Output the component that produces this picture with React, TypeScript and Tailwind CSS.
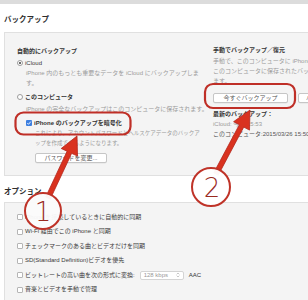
import type { ReactNode } from 'react'

function Radio({ on = false }: { on?: boolean }) {
  return (
    <span className="flex h-[6px] w-[6px] shrink-0 items-center justify-center rounded-full border-[0.5px] border-[#9d9d9d] bg-white">
      {on && <span className="h-[2.5px] w-[2.5px] rounded-full bg-[#3a3a3a]" />}
    </span>
  )
}

function Box({ checked = false }: { checked?: boolean }) {
  if (checked) {
    return (
      <span className="flex h-[6px] w-[6px] shrink-0 items-center justify-center rounded-[1px] bg-[#3d7fe0]">
        <svg viewBox="0 0 6 6" className="h-[6px] w-[6px]">
          <path d="M1.3 3.1 2.5 4.3 4.8 1.6" fill="none" stroke="white" strokeWidth="0.9" />
        </svg>
      </span>
    )
  }
  return <span className="h-[6px] w-[6px] shrink-0 rounded-[1px] border-[0.5px] border-[#b5b5b5] bg-white" />
}

function Btn({ children, w }: { children: ReactNode; w: string }) {
  return (
    <div
      className={`flex h-[10px] shrink-0 items-center justify-center rounded-[2px] border-[0.5px] border-[#c6c6c6] bg-white text-[6px] text-[#555] shadow-[0_0.5px_0.5px_rgba(0,0,0,0.08)] ${w}`}
    >
      {children}
    </div>
  )
}

function Line({ children, className = '' }: { children: ReactNode; className?: string }) {
  return <div className={`h-[10px] whitespace-nowrap leading-[10px] ${className}`}>{children}</div>
}

function OptionRow({ children }: { children: ReactNode }) {
  return (
    <div className="flex h-[10px] items-center gap-[2px] whitespace-nowrap text-[6px] text-[#3a3a3a]">
      <Box />
      {children}
    </div>
  )
}

function arrow(x1: number, y1: number, x2: number, y2: number, w = 5, hl = 18, hw = 18) {
  const len = Math.hypot(x2 - x1, y2 - y1)
  const ux = (x2 - x1) / len
  const uy = (y2 - y1) / len
  const px = -uy
  const py = ux
  const bx = x2 - ux * hl
  const by = y2 - uy * hl
  const pts = [
    [x1 + (px * w) / 2, y1 + (py * w) / 2],
    [bx + (px * w) / 2, by + (py * w) / 2],
    [bx + (px * hw) / 2, by + (py * hw) / 2],
    [x2, y2],
    [bx - (px * hw) / 2, by - (py * hw) / 2],
    [bx - (px * w) / 2, by - (py * w) / 2],
    [x1 - (px * w) / 2, y1 - (py * w) / 2],
  ]
  return pts.map((p) => p.join(',')).join(' ')
}

function Marks() {
  return (
    <svg className="pointer-events-none absolute left-0 top-0" width="308" height="300" viewBox="0 0 308 300">
      <rect x="15.5" y="112.5" width="115" height="22" rx="8" fill="none" stroke="#bf2f27" strokeWidth="2.2" />
      <rect x="205" y="84" width="90" height="24" rx="8" fill="none" stroke="#bf2f27" strokeWidth="2.2" />
      <polygon points={arrow(48, 198, 77, 136)} fill="#d9321f" stroke="#b3241a" strokeWidth="0.8" />
      <polygon points={arrow(216, 174, 250, 110)} fill="#d9321f" stroke="#b3241a" strokeWidth="0.8" />
      <circle cx="43" cy="211" r="18" fill="#fbfbfb" fillOpacity="0.96" stroke="#bf3328" strokeWidth="2" />
      <circle cx="211" cy="187" r="19" fill="#ffffff" fillOpacity="0.96" stroke="#bf3328" strokeWidth="2" />
      <text x="43" y="220.5" textAnchor="middle" fontSize="26" fill="#9a2a1f" fontFamily="'DejaVu Sans', sans-serif" fontWeight="300">
        1
      </text>
      <text x="212" y="196.5" textAnchor="middle" fontSize="26" fill="#9a2a1f" fontFamily="'DejaVu Sans', sans-serif" fontWeight="300">
        2
      </text>
    </svg>
  )
}

export default function App() {
  return (
    <div className="relative h-[300px] w-[308px] overflow-hidden bg-white font-['Liberation_Sans','Noto_Sans_CJK_JP',sans-serif] text-[#3a3a3a]">
      <div className="h-[4px] bg-[#dcdcdc]" />

      <div className="pl-[4px]">
        <h2 className="h-[28px] pt-[11px] text-[7.5px] font-bold leading-[10px] text-[#2e2e2e]">バックアップ</h2>

        <div className="flex h-[144px] w-[340px] border border-[#e0e0e0] bg-[#f4f4f4]">
          {/* left column */}
          <div className="flex w-[208px] shrink-0 flex-col pl-[12px] pt-[13px] text-[6px]">
            <Line className="font-bold text-[#333]">自動的にバックアップ</Line>
            <div className="mt-[2px] flex h-[10px] items-center gap-[2px]">
              <Radio on />
              <span>iCloud</span>
            </div>
            <Line className="pl-[9px] text-[#9b9b9b]">iPhone 内のもっとも重要なデータを iCloud にバックアップしま</Line>
            <Line className="pl-[9px] text-[#9b9b9b]">す。</Line>
            <div className="mt-[4px] flex h-[10px] items-center gap-[2px]">
              <Radio />
              <span className="font-bold text-[#333]">このコンピュータ</span>
            </div>
            <Line className="mt-[2px] pl-[9px] text-[#9b9b9b]">iPhone の完全なバックアップはこのコンピュータに保存されます。</Line>
            <div className="mt-[4px] flex h-[10px] items-center gap-[2px] pl-[9px]">
              <Box checked />
              <span className="font-semibold text-[#333]">iPhone のバックアップを暗号化</span>
            </div>
            <Line className="pl-[18px] text-[5.5px] text-[#9b9b9b]">これにより、アカウントパスワードとヘルスケアデータのバックア</Line>
            <Line className="pl-[18px] text-[5.5px] text-[#9b9b9b]">ップを作成できるようになります。</Line>
            <div className="mt-[5px] pl-[18px]">
              <Btn w="w-[72px]">パスワードを変更...</Btn>
            </div>
          </div>

          {/* right column */}
          <div className="flex flex-col pt-[12px] text-[6px]">
            <Line className="font-bold text-[#333]">手動でバックアップ／復元</Line>
            <Line className="mt-[1px] text-[#9b9b9b]">手動で、このコンピュータに iPhone をバックアップしたり、</Line>
            <Line className="text-[#9b9b9b]">このコンピュータに保存されたバックアップを復元したりし</Line>
            <Line className="text-[#9b9b9b]">ます。</Line>
            <div className="mt-[7px] flex gap-[10px]">
              <Btn w="w-[75px]">今すぐバックアップ</Btn>
              <Btn w="w-[75px]">バックアップを復元...</Btn>
            </div>
            <div className="mt-[7px] h-[9px] whitespace-nowrap font-bold leading-[9px] text-[#333]">最新のバックアップ：</div>
            <Line className="text-[#9b9b9b]">iCloud: 今日 15:53</Line>
            <Line className="text-[#555]">このコンピュータ:2015/03/26 15:50</Line>
          </div>
        </div>

        <h2 className="mt-[11px] h-[10px] text-[7.5px] font-bold leading-[10px] text-[#2e2e2e]">オプション</h2>

        <div className="mt-[5px] flex h-[120px] w-[340px] flex-col gap-[4.6px] border border-[#e0e0e0] bg-[#f4f4f4] pl-[12px] pt-[9px]">
          <OptionRow>iPhone を接続しているときに自動的に同期</OptionRow>
          <OptionRow>Wi-Fi 経由でこの iPhone と同期</OptionRow>
          <OptionRow>チェックマークのある曲とビデオだけを同期</OptionRow>
          <OptionRow>SD(Standard Definition)ビデオを優先</OptionRow>
          <OptionRow>
            <span>ビットレートの高い曲を次の形式に変換:</span>
            <span className="ml-[3px] flex h-[9px] w-[44px] items-center justify-between rounded-[2px] border-[0.5px] border-[#d4d4d4] bg-white px-[3px] text-[#999]">
              <span>128 kbps</span>
              <svg viewBox="0 0 6 8" className="h-[6px] w-[4px]">
                <path d="M1 3 3 1 5 3M1 5 3 7 5 5" fill="none" stroke="#999" strokeWidth="0.8" />
              </svg>
            </span>
            <span className="ml-[3px] text-[#333]">AAC</span>
          </OptionRow>
          <OptionRow>音楽とビデオを手動で管理</OptionRow>
        </div>
      </div>

      <Marks />
    </div>
  )
}
